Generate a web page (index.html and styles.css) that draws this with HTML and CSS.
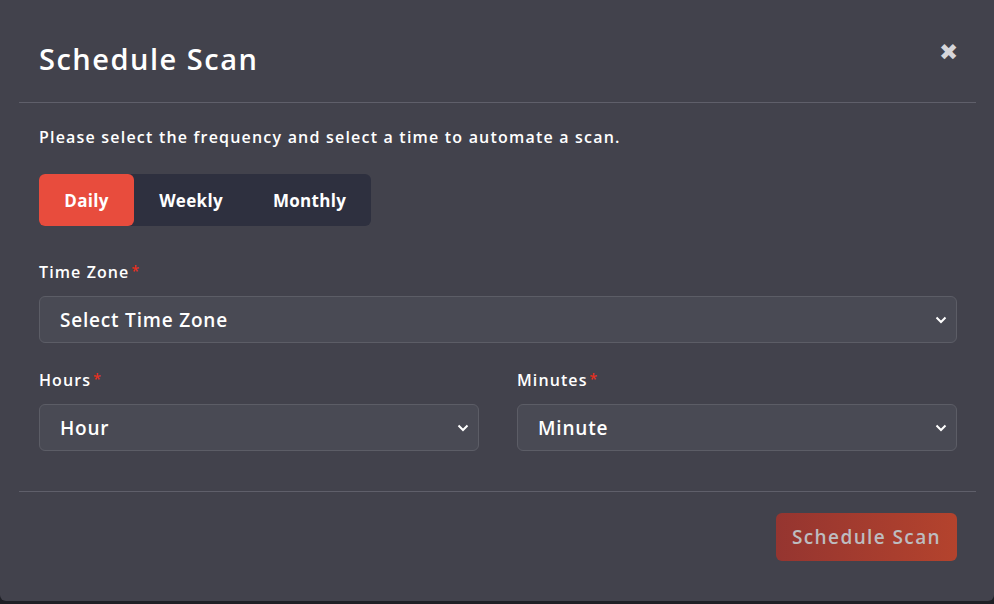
FILE: index.html
```html
<!DOCTYPE html>
<html>
<head>
<meta charset="utf-8">
<link rel="stylesheet" href="styles.css">
</head>
<body>
<div class="modal">
  <div class="modal-header">
    <h2 class="title">Schedule Scan</h2>
    <span class="close">&#10006;</span>
  </div>
  <div class="modal-body">
    <p class="desc">Please select the frequency and select a time to automate a scan.</p>
    <div class="tabs">
      <span class="tab active">Daily</span>
      <span class="tab">Weekly</span>
      <span class="tab">Monthly</span>
    </div>
    <div class="field">
      <label class="label">Time Zone<span class="req">*</span></label>
      <div class="select"><span>Select Time Zone</span><svg width="12" height="8" viewBox="0 0 12 8"><path d="M1.5 1.5 L6 6 L10.5 1.5" fill="none" stroke="#fff" stroke-width="2"/></svg></div>
    </div>
    <div class="row">
      <div class="field">
        <label class="label">Hours<span class="req">*</span></label>
        <div class="select"><span>Hour</span><svg width="12" height="8" viewBox="0 0 12 8"><path d="M1.5 1.5 L6 6 L10.5 1.5" fill="none" stroke="#fff" stroke-width="2"/></svg></div>
      </div>
      <div class="field">
        <label class="label">Minutes<span class="req">*</span></label>
        <div class="select"><span>Minute</span><svg width="12" height="8" viewBox="0 0 12 8"><path d="M1.5 1.5 L6 6 L10.5 1.5" fill="none" stroke="#fff" stroke-width="2"/></svg></div>
      </div>
    </div>
  </div>
  <div class="modal-footer">
    <button class="btn">Schedule Scan</button>
  </div>
</div>
</body>
</html>
```
FILE: styles.css
```css
* { box-sizing: border-box; }
html, body { margin: 0; padding: 0; }
body {
  width: 994px;
  height: 604px;
  background: #1e1f25;
  font-family: "Open Sans", "Noto Sans", sans-serif;
  color: #fff;
  overflow: hidden;
}
.modal {
  width: 994px;
  height: 601px;
  background: #42424c;
  border-radius: 0 0 6px 6px;
  display: flex;
  flex-direction: column;
}
.modal-header {
  margin: 0 18px 0 19px;
  height: 103px;
  border-bottom: 1px solid #5f5f6a;
  display: flex;
  justify-content: space-between;
  align-items: flex-start;
  padding: 0 20px;
}
.title {
  margin: 40px 0 0;
  font-size: 29px;
  font-weight: 600;
  line-height: 38px;
  letter-spacing: 1.5px;
}
.close {
  margin-top: 36px;
  margin-right: -2px;
  font-size: 23px;
  color: #d6d6da;
  line-height: 30px;
}
.modal-body {
  padding: 0 37px 0 39px;
  height: 388px;
}
.desc {
  margin: 22px 0 0;
  font-size: 16px;
  font-weight: 600;
  line-height: 24px;
  letter-spacing: 1.2px;
}
.tabs {
  margin-top: 25px;
  display: inline-flex;
  background: #2e303f;
  border-radius: 6px;
  height: 52px;
  width: 332px;
}
.tab {
  display: flex;
  align-items: center;
  justify-content: center;
  font-size: 17px;
  font-weight: 700;
  height: 52px;
  letter-spacing: 0.3px;
}
.tab:nth-child(1) { width: 95px; }
.tab:nth-child(2) { width: 114px; }
.tab:nth-child(3) { width: 123px; }
.tab.active {
  background: #e84c3d;
  border-radius: 6px;
}
.field { margin-top: 33px; flex: 1; }
.label {
  display: block;
  font-size: 16px;
  font-weight: 600;
  line-height: 24px;
  margin-bottom: 12px;
  letter-spacing: 1.1px;
}
.req { color: #e8301f; margin-left: 2px; font-size: 14px; vertical-align: 2px; letter-spacing: 0; }
.select {
  height: 47px;
  background: #494a54;
  border: 1px solid #5c5d66;
  border-radius: 6px;
  display: flex;
  align-items: center;
  justify-content: space-between;
  padding: 0 9px 0 20px;
  font-size: 19px;
  font-weight: 600;
  letter-spacing: 0.8px;
}
.row {
  display: flex;
  gap: 38px;
}
.row .field { margin-top: 24px; }
.modal-footer {
  margin: 0 18px 0 19px;
  border-top: 1px solid #5f5f6a;
  display: flex;
  justify-content: flex-end;
  padding: 21px 19px 0 0;
}
.btn {
  width: 181px;
  height: 48px;
  border: none;
  border-radius: 6px;
  background: linear-gradient(90deg, #953530, #b4432d);
  color: #bdbdc0;
  font-family: inherit;
  font-size: 19px;
  font-weight: 600;
  letter-spacing: 1.4px;
}
```
